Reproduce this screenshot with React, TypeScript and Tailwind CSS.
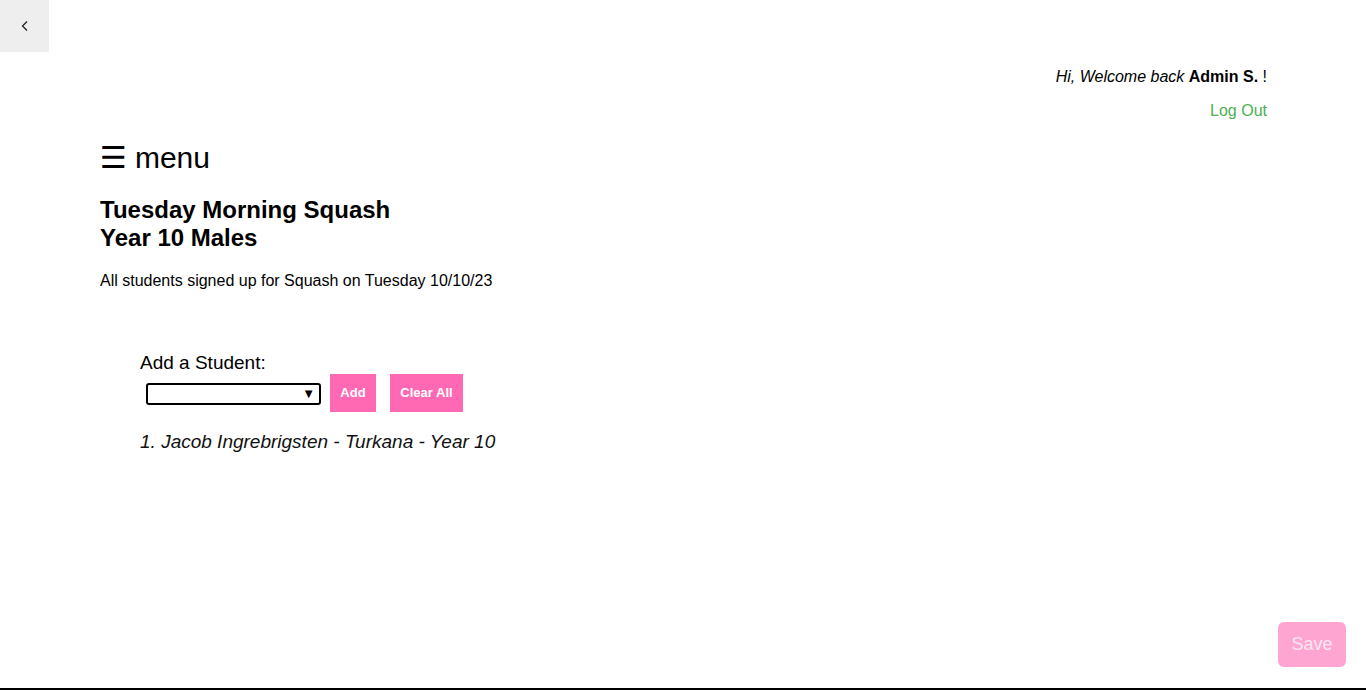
import { useState } from "react"

const students = ["Jacob Ingrebrigsten - Turkana - Year 10"]

export default function App() {
  const [list, setList] = useState<string[]>(students)

  return (
    <div className="relative h-[690px] w-full border-b-2 border-black bg-white font-['Liberation_Sans',Arial,sans-serif] text-black">
      <button className="flex h-[52px] w-[49px] items-center justify-center bg-[#eeeeee]">
        <svg width="10" height="12" viewBox="0 0 10 12" fill="none">
          <path d="M7 1.5 L2.5 6 L7 10.5" stroke="#222" strokeWidth="1.3" />
        </svg>
      </button>

      <div className="pl-[100px] pr-[99px]">
        <div className="mt-[16px] flex flex-col items-end text-[16px] leading-[18px]">
          <p>
            <span className="italic">Hi, Welcome back </span>
            <span className="font-bold">Admin S.</span> !
          </p>
          <a className="mt-[16px] text-[#4caf50]">Log Out</a>
        </div>

        <div className="mt-[21px] flex items-center text-[30px] leading-[34px]">
          <span className="font-['DejaVu_Sans',sans-serif] text-[30px]">☰</span>
          <span className="ml-[8px]">menu</span>
        </div>

        <h2 className="mt-[21px] text-[24px] font-bold leading-[28px]">
          Tuesday Morning Squash
          <br />
          Year 10 Males
        </h2>

        <p className="mt-[20px] text-[16px] leading-[18px]">All students signed up for Squash on Tuesday 10/10/23</p>

        <div className="ml-[40px] mt-[62px]">
          <p className="text-[19px] leading-[22px]">Add a Student:</p>
          <div className="flex items-center">
            <div className="relative ml-[6px] mt-[1px] h-[22px] w-[175px] rounded-[3px] border-2 border-black">
              <span className="absolute right-[4px] top-[-1px] text-[13px] leading-[20px]">▼</span>
            </div>
            <button className="ml-[9px] h-[38px] w-[46px] bg-[#ff69b4] text-[13px] font-bold text-white">Add</button>
            <button
              onClick={() => setList([])}
              className="ml-[14px] h-[38px] w-[73px] bg-[#ff69b4] text-[13px] font-bold text-white"
            >
              Clear All
            </button>
          </div>
          <ol className="mt-[19px] text-[19px] italic leading-[22px] text-[#111]">
            {list.map((s, i) => (
              <li key={s}>
                {i + 1}. {s}
              </li>
            ))}
          </ol>
        </div>
      </div>

      <button className="absolute bottom-[21px] right-[20px] h-[45px] w-[68px] rounded-[6px] bg-[#ffa5d2] text-[18px] text-[#fde6f1]">
        Save
      </button>
    </div>
  )
}
